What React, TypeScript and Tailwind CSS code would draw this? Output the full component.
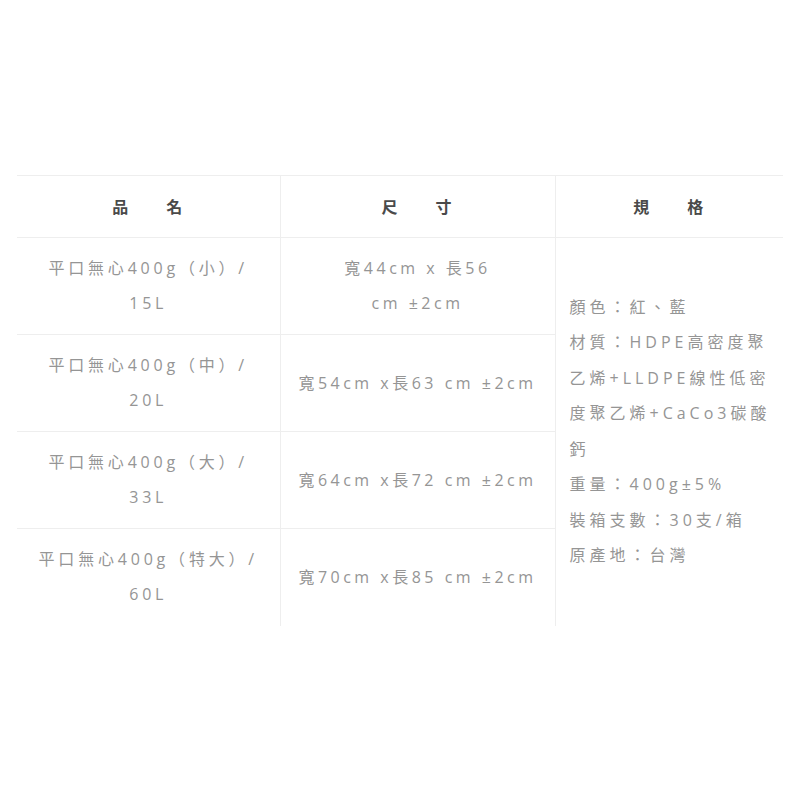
const FONT = "font-['Open_Sans','Noto_Sans_CJK_TC',sans-serif]"

const rows = [
  { name: ['平口無心400g（小）/', '15L'], size: ['寬44cm x 長56', 'cm ±2cm'] },
  { name: ['平口無心400g（中）/', '20L'], size: ['寬54cm x長63 cm ±2cm'] },
  { name: ['平口無心400g（大）/', '33L'], size: ['寬64cm x長72 cm ±2cm'] },
  { name: ['平口無心400g（特大）/', '60L'], size: ['寬70cm x長85 cm ±2cm'] },
]

const spec = [
  '顏色：紅、藍',
  '材質：HDPE高密度聚',
  '乙烯+LLDPE線性低密',
  '度聚乙烯+CaCo3碳酸',
  '鈣',
  '重量：400g±5%',
  '裝箱支數：30支/箱',
  '原產地：台灣',
]

export default function App() {
  return (
    <div className={`w-[800px] h-[800px] bg-white pt-[175px] px-[17px] ${FONT}`}>
      <table className="w-full border-collapse table-fixed">
        <colgroup>
          <col className="w-[263px]" />
          <col className="w-[275px]" />
          <col />
        </colgroup>
        <thead>
          <tr className="h-[62px] border-t border-b border-[#eeeeee]">
            <th className="font-semibold text-[16px] text-[#4a4a4a] tracking-[2px] text-center border-r border-[#eeeeee]">品　　名</th>
            <th className="font-semibold text-[16px] text-[#4a4a4a] tracking-[2px] text-center border-r border-[#eeeeee]">尺　　寸</th>
            <th className="font-semibold text-[16px] text-[#4a4a4a] tracking-[2px] text-center">規　　格</th>
          </tr>
        </thead>
        <tbody>
          {rows.map((r, i) => (
            <tr key={i} className={`h-[97px] ${i < rows.length - 1 ? 'border-b border-[#eeeeee]' : ''}`}>
              <td className="text-center align-middle text-[16px] leading-[35px] tracking-[3.8px] text-[#959595] border-r border-[#eeeeee] whitespace-nowrap">
                {r.name.map(l => <div key={l}>{l}</div>)}
              </td>
              <td className="text-center align-middle text-[16px] leading-[35px] tracking-[3.5px] text-[#959595] border-r border-[#eeeeee] whitespace-nowrap">
                {r.size.map(l => <div key={l}>{l}</div>)}
              </td>
              {i === 0 && (
                <td rowSpan={4} className="align-middle pl-[14px] text-[16px] leading-[35.5px] tracking-[4px] text-[#959595] whitespace-nowrap">
                  {spec.map(l => <div key={l}>{l}</div>)}
                </td>
              )}
            </tr>
          ))}
        </tbody>
      </table>
    </div>
  )
}
